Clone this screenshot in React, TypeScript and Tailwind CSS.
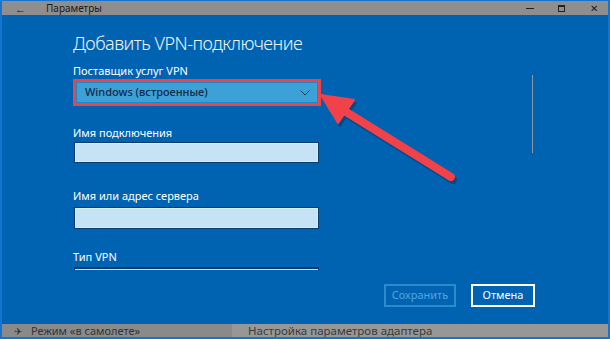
import React from "react";

export default function App() {
  const font = { fontFamily: '"Segoe UI", "Noto Sans", "Open Sans", sans-serif' };
  return (
    <div className="relative w-[610px] h-[339px] overflow-hidden bg-[#1574cf] pt-[1px] pb-[2px] px-[2px]" style={font}>
      <div className="flex h-full flex-col">
        {/* title bar */}
        <div className="flex h-[14px] items-center bg-[#8e8e8e] text-[#1a1a1a]">
          <span className="ml-[13px] text-[11px] leading-[13px]">←</span>
          <span className="ml-[20px] text-[10px] leading-[13px]">Параметры</span>
          <div className="ml-auto flex items-center">
            <span className="mr-[24px] block h-[1px] w-[8px] bg-[#222]" />
            <span className="mr-[25px] block h-[7px] w-[7px] border border-[#222] border-t-2" />
            <span className="mr-[10px] text-[10px] leading-[13px]">✕</span>
          </div>
        </div>
        {/* main */}
        <div className="flex flex-1 bg-[#0063b1]">
          <div className="ml-[71px] h-[255px] w-[250px] shrink-0 overflow-hidden">
            <div className="mt-[16px] whitespace-nowrap text-[18px] font-light leading-[24px] tracking-[-0.5px] text-[#eef3f8]">
              Добавить VPN-подключение
            </div>
            <div className="mt-[8px] text-[11px] font-normal leading-[15px] text-white">Поставщик услуг VPN</div>
            <div className="mt-[1px] h-[27px] w-[248px] border-[3px] border-[#ee4449] bg-[#1f86c8] p-[1px]">
              <div className="flex h-full items-center bg-[#3ba1d6] pl-[8px] pr-[7px]">
                <span className="text-[11px] font-medium text-[#13294a]">Windows (встроенные)</span>
                <svg className="ml-auto" width="10" height="6" viewBox="0 0 10 6">
                  <path d="M0.5 0.5 L5 5 L9.5 0.5" fill="none" stroke="#1d3b5e" strokeWidth="1" />
                </svg>
              </div>
            </div>
            <div className="mt-[19px] text-[11px] leading-[15px] text-white">Имя подключения</div>
            <div className="ml-[1px] mt-[2px] h-[21px] w-[245px] border border-[#073e6e] bg-[#c6e2f5] shadow-[inset_0_0_0_1px_#d9edf9]" />
            <div className="mt-[25px] text-[11px] leading-[15px] text-white">Имя или адрес сервера</div>
            <div className="ml-[1px] mt-[4px] h-[22px] w-[245px] border border-[#073e6e] bg-[#c6e2f5] shadow-[inset_0_0_0_1px_#d9edf9]" />
            <div className="mt-[20px] text-[11px] leading-[15px] text-white">Тип VPN</div>
            <div className="ml-[1px] mt-[3px] h-[22px] w-[245px] border-t-[2px] border-x border-[#073e6e] bg-[#c6e2f5]" />
          </div>
          <div className="flex flex-1 flex-col items-end pr-[73px]">
            <div className="mr-[2px] mt-[60px] h-[78px] w-[1px] bg-[#8a98a6]" />
            <div className="flex-1" />
            <div className="mb-[17px] flex gap-[15px]">
              <div className="flex h-[23px] w-[72px] items-center justify-center border-2 border-[#2d8acb] text-[11px] text-[#4ea6e0]">
                Сохранить
              </div>
              <div className="flex h-[23px] w-[64px] items-center justify-center border-2 border-white text-[11px] text-white">
                Отмена
              </div>
            </div>
          </div>
        </div>
        {/* bottom strip */}
        <div className="flex h-[13px] overflow-hidden">
          <div className="flex w-[230px] items-center bg-[#8a8a8a] text-[#333]">
            <span className="ml-[12px] text-[10px] leading-[12px]">✈</span>
            <span className="ml-[9px] text-[11px] leading-[13px]">Режим «в самолете»</span>
          </div>
          <div className="flex flex-1 items-center bg-[#979797] pl-[16px] text-[#3a3a3a]">
            <span className="text-[11.5px] leading-[13px]">Настройка параметров адаптера</span>
          </div>
        </div>
      </div>
      {/* red arrow overlay */}
      <svg className="pointer-events-none absolute left-0 top-0" width="610" height="339" viewBox="0 0 610 339">
        <g transform="translate(2,3)" fill="#0b2d55" stroke="#0b2d55" opacity="0.45">
          <line x1="451" y1="177" x2="343" y2="110" strokeWidth="8" strokeLinecap="round" />
          <polygon points="321,95 354,100 338,123" strokeWidth="2" strokeLinejoin="round" />
        </g>
        <line x1="451" y1="177" x2="343" y2="110" stroke="#f1424a" strokeWidth="8" strokeLinecap="round" />
        <polygon points="321,95 354,100 338,123" fill="#f1424a" stroke="#f1424a" strokeWidth="2" strokeLinejoin="round" />
      </svg>
    </div>
  );
}
